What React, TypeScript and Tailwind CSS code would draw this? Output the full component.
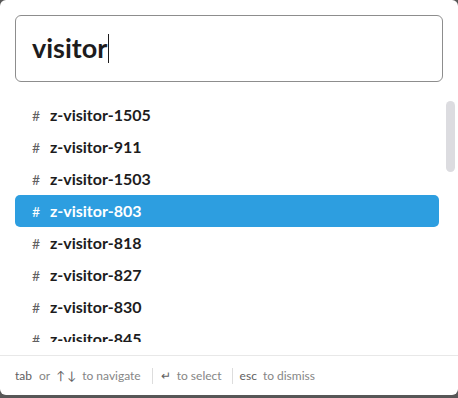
const channels = [
  "z-visitor-1505",
  "z-visitor-911",
  "z-visitor-1503",
  "z-visitor-803",
  "z-visitor-818",
  "z-visitor-827",
  "z-visitor-830",
  "z-visitor-845",
];

const selected = "z-visitor-803";

export default function App() {
  return (
    <div className="h-[398px] w-[458px] overflow-hidden bg-[#575757] font-['Lato','Liberation_Sans',sans-serif]">
      <div className="flex h-[395px] flex-col rounded-md bg-white">
        {/* search box */}
        <div className="px-[15px] pt-[15px]">
          <div className="flex h-[67px] items-center rounded-md border border-[#8d8d8d] px-[16px]">
            <span className="text-[27px] font-bold text-[#1d1c1d]">visitor</span>
            <span className="ml-px h-[29px] w-px bg-[#1d1c1d]" />
          </div>
        </div>

        {/* results */}
        <div className="relative mt-[17px] h-[243px] overflow-hidden">
          <ul className="flex flex-col pl-[15px] pr-[19px]">
            {channels.map((c) => {
              const active = c === selected;
              return (
                <li
                  key={c}
                  className={
                    "flex h-[32px] shrink-0 items-center rounded-[5px] pl-[17px] " +
                    (active ? "bg-[#2d9ee0] text-white" : "text-[#1d1c1d]")
                  }
                >
                  <span
                    className={
                      "w-[18px] text-[14px] " +
                      (active ? "text-white" : "text-[#616061]")
                    }
                  >
                    #
                  </span>
                  <span className="text-[16px] font-bold">{c}</span>
                </li>
              );
            })}
          </ul>
          <div className="absolute right-[3px] top-[2px] h-[71px] w-[9px] rounded-full bg-[#dcdce0]" />
        </div>

        {/* footer */}
        <div className="mt-[13px] flex h-[40px] items-center border-t border-[#e8e8e8] px-[15px] text-[12px] text-[#868686]">
          <span className="text-[#616061]">tab</span>
          <span className="ml-[7px]">or</span>
          <span className="ml-[6px] text-[#616061]">↑</span>
          <span className="ml-[2px] text-[#616061]">↓</span>
          <span className="ml-[6px]">to navigate</span>
          <span className="ml-[11px] mr-[8px] h-[16px] w-px bg-[#dddddd]" />
          <span className="text-[#616061]">↵</span>
          <span className="ml-[6px]">to select</span>
          <span className="ml-[10px] mr-[7px] h-[16px] w-px bg-[#dddddd]" />
          <span className="text-[#616061]">esc</span>
          <span className="ml-[6px]">to dismiss</span>
        </div>
      </div>
    </div>
  );
}
